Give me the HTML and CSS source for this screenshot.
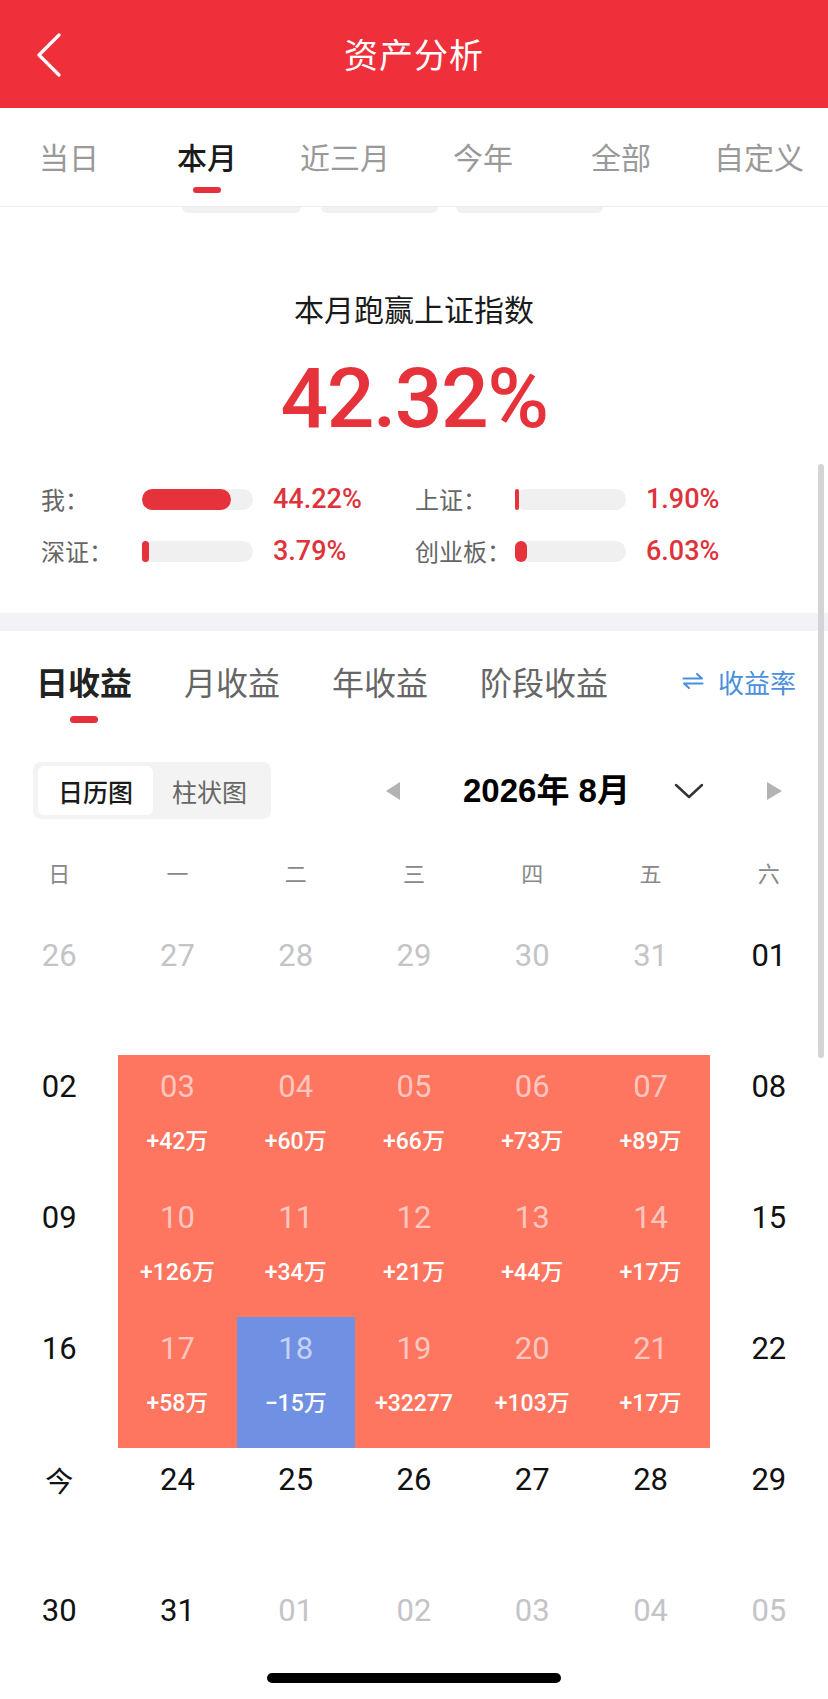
FILE: index.html
```html
<!DOCTYPE html>
<html lang="zh-CN">
<head>
<meta charset="utf-8">
<title>资产分析</title>
<link rel="stylesheet" href="styles.css">
</head>
<body>
<div class="screen">
  <header class="nav">
    <div class="nav-left">
      <svg class="back" width="26" height="44" viewBox="0 0 26 44"><polyline points="23,2 3,22 23,42" fill="none" stroke="#fff" stroke-width="3.2" stroke-linecap="round" stroke-linejoin="round"/></svg>
    </div>
    <h1 class="nav-title">资产分析</h1>
    <div class="nav-right"></div>
  </header>

  <nav class="period-tabs">
    <div class="ptab"><span>当日</span><i></i></div>
    <div class="ptab active"><span>本月</span><i></i></div>
    <div class="ptab"><span>近三月</span><i></i></div>
    <div class="ptab"><span>今年</span><i></i></div>
    <div class="ptab"><span>全部</span><i></i></div>
    <div class="ptab"><span>自定义</span><i></i></div>
  </nav>
  <div class="ghost-pills">
    <div class="gp gp1"></div>
    <div class="gp gp2"></div>
    <div class="gp gp3"></div>
  </div>

  <section class="summary">
    <div class="sum-title">本月跑赢上证指数</div>
    <div class="sum-value">42.32%</div>
    <div class="compare">
      <div class="c-label">我：</div>
      <div class="c-bar"><div class="c-fill" style="width:89px"></div></div>
      <div class="c-val">44.22%</div>
      <div class="c-label">上证：</div>
      <div class="c-bar"><div class="c-fill" style="width:4px"></div></div>
      <div class="c-val">1.90%</div>
      <div class="c-label">深证：</div>
      <div class="c-bar"><div class="c-fill" style="width:7px"></div></div>
      <div class="c-val">3.79%</div>
      <div class="c-label">创业板：</div>
      <div class="c-bar"><div class="c-fill" style="width:12px"></div></div>
      <div class="c-val">6.03%</div>
    </div>
  </section>

  <div class="band"></div>

  <section class="earn">
    <div class="etabs">
      <div class="etab active"><span>日收益</span><i></i></div>
      <div class="etab"><span>月收益</span><i></i></div>
      <div class="etab"><span>年收益</span><i></i></div>
      <div class="etab"><span>阶段收益</span><i></i></div>
      <div class="rate">
        <svg width="22" height="18" viewBox="0 0 22 18"><path d="M1.5 6.5 H20 L15 2" fill="none" stroke="#4a8fdc" stroke-width="2" stroke-linecap="round" stroke-linejoin="round"/><path d="M20.5 11.5 H2 L7 16" fill="none" stroke="#4a8fdc" stroke-width="2" stroke-linecap="round" stroke-linejoin="round"/></svg>
        <span>收益率</span>
      </div>
    </div>

    <div class="toolbar">
      <div class="seg">
        <div class="seg-item on">日历图</div>
        <div class="seg-item">柱状图</div>
      </div>
      <div class="picker">
        <span class="tri tri-left"></span>
        <span class="month">2026年 8月</span>
        <svg class="chev" width="30" height="18" viewBox="0 0 30 18"><polyline points="2,3 15,15 28,3" fill="none" stroke="#333" stroke-width="2.4" stroke-linecap="round" stroke-linejoin="round"/></svg>
        <span class="tri tri-right"></span>
      </div>
    </div>

    <div class="weekdays">
      <div>日</div><div>一</div><div>二</div><div>三</div><div>四</div><div>五</div><div>六</div>
    </div>

    <div class="cal">
      <div class="cell dim"><b>26</b></div>
      <div class="cell dim"><b>27</b></div>
      <div class="cell dim"><b>28</b></div>
      <div class="cell dim"><b>29</b></div>
      <div class="cell dim"><b>30</b></div>
      <div class="cell dim"><b>31</b></div>
      <div class="cell"><b>01</b></div>

      <div class="cell"><b>02</b></div>
      <div class="cell up"><b>03</b><em>+42万</em></div>
      <div class="cell up"><b>04</b><em>+60万</em></div>
      <div class="cell up"><b>05</b><em>+66万</em></div>
      <div class="cell up"><b>06</b><em>+73万</em></div>
      <div class="cell up"><b>07</b><em>+89万</em></div>
      <div class="cell"><b>08</b></div>

      <div class="cell"><b>09</b></div>
      <div class="cell up"><b>10</b><em>+126万</em></div>
      <div class="cell up"><b>11</b><em>+34万</em></div>
      <div class="cell up"><b>12</b><em>+21万</em></div>
      <div class="cell up"><b>13</b><em>+44万</em></div>
      <div class="cell up"><b>14</b><em>+17万</em></div>
      <div class="cell"><b>15</b></div>

      <div class="cell"><b>16</b></div>
      <div class="cell up"><b>17</b><em>+58万</em></div>
      <div class="cell down"><b>18</b><em>−15万</em></div>
      <div class="cell up"><b>19</b><em>+32277</em></div>
      <div class="cell up"><b>20</b><em>+103万</em></div>
      <div class="cell up"><b>21</b><em>+17万</em></div>
      <div class="cell"><b>22</b></div>

      <div class="cell"><b class="cjk">今</b></div>
      <div class="cell"><b>24</b></div>
      <div class="cell"><b>25</b></div>
      <div class="cell"><b>26</b></div>
      <div class="cell"><b>27</b></div>
      <div class="cell"><b>28</b></div>
      <div class="cell"><b>29</b></div>

      <div class="cell"><b>30</b></div>
      <div class="cell"><b>31</b></div>
      <div class="cell dim"><b>01</b></div>
      <div class="cell dim"><b>02</b></div>
      <div class="cell dim"><b>03</b></div>
      <div class="cell dim"><b>04</b></div>
      <div class="cell dim"><b>05</b></div>
    </div>
  </section>

  <div class="scrollbar"></div>
  <div class="home-indicator"></div>
</div>
</body>
</html>
```

FILE: styles.css
```css
* { box-sizing: border-box; margin: 0; padding: 0; }
html, body { width: 828px; height: 1699px; overflow: hidden; background: #fff; }
body {
  font-family: "Noto Sans CJK SC", "Noto Sans", sans-serif;
  color: #222;
}
.screen { position: relative; width: 828px; height: 1699px; overflow: hidden; background: #fff; }

/* nav */
.nav {
  height: 108px;
  background: #ef303a;
  display: grid;
  grid-template-columns: 1fr auto 1fr;
  align-items: center;
}
.nav-left { padding-left: 36px; display: flex; align-items: center; padding-top: 2px; }
.nav-title {
  font-size: 34px;
  font-weight: 400;
  color: #fff;
  line-height: 44px;
  letter-spacing: 1px;
}

/* period tabs */
.period-tabs {
  display: grid;
  grid-template-columns: repeat(6, 1fr);
  padding-top: 28px;
  padding-bottom: 13px;
  border-bottom: 1px solid #ececec;
}
.ptab { display: flex; flex-direction: column; align-items: center; }
.ptab span { font-size: 30px; line-height: 40px; color: #999; }
.ptab i { display: block; width: 28px; height: 6px; margin-top: 11px; border-radius: 3px; background: transparent; }
.ptab.active span { color: #1a1a1a; font-weight: 500; }
.ptab.active i { background: #e3303a; }

.ghost-pills { display: flex; height: 6px; padding-left: 182px; }
.gp { height: 6px; background: #f1f1f1; border-radius: 0 0 9px 9px; }
.gp1 { width: 119px; }
.gp2 { width: 117px; margin-left: 20px; }
.gp3 { width: 147px; margin-left: 18px; }

/* summary */
.summary { padding-top: 75px; padding-bottom: 36px; }
.sum-title { text-align: center; font-size: 30px; line-height: 40px; color: #1a1a1a; }
.sum-value {
  text-align: center;
  margin-top: 21px;
  font-family: Roboto, "Liberation Sans", sans-serif;
  font-size: 84px;
  font-weight: 500;
  line-height: 100px;
  color: #e6323b;
  letter-spacing: -1.5px;
}
.compare {
  margin-top: 24px;
  display: grid;
  grid-template-columns: 101px 111px 162px 100px 111px 1fr;
  grid-auto-rows: 52px;
  align-items: center;
  padding-left: 41px;
}
.c-label { font-size: 24px; color: #666; line-height: 32px; }
.c-bar { height: 21px; border-radius: 11px; background: #f0f0f0; }
.c-fill { height: 100%; background: #e6323b; border-radius: 999px; }
.c-val {
  padding-left: 20px;
  font-family: Roboto, "Liberation Sans", sans-serif;
  font-size: 27px;
  font-weight: 500;
  color: #e0323b;
  line-height: 32px;
}

.band { height: 18px; background: #f2f3f7; }

/* earnings */
.etabs {
  display: flex;
  align-items: flex-start;
  padding-top: 28px;
  padding-left: 36px;
  padding-right: 32px;
}
.etab { display: flex; flex-direction: column; align-items: center; margin-right: 52px; }
.etab span { font-size: 32px; line-height: 44px; color: #666; }
.etab i { display: block; width: 28px; height: 7px; margin-top: 13px; border-radius: 4px; }
.etab.active span { color: #222; font-weight: 700; }
.etab.active i { background: #e3303a; }
.rate {
  margin-left: auto;
  display: flex;
  align-items: center;
  height: 44px;
  gap: 14px;
  color: #4a8fdc;
  font-size: 26px;
}
.etab:nth-child(4) { margin-right: 0; }

.toolbar { display: flex; align-items: center; margin-top: 39px; padding-left: 33px; }
.seg {
  width: 238px;
  height: 57px;
  padding: 4px 5px;
  background: #f3f3f3;
  border-radius: 8px;
  display: flex;
}
.seg-item {
  flex: 1;
  display: flex; align-items: center; justify-content: center;
  font-size: 25px;
  color: #666;
  border-radius: 6px;
}
.seg-item.on { background: #fff; color: #1a1a1a; font-weight: 500; flex: 0 0 115px; }

.picker { display: flex; align-items: center; margin-left: 115px; width: 396px; }
.tri { width: 0; height: 0; border-top: 9px solid transparent; border-bottom: 9px solid transparent; }
.tri-left { border-right: 14px solid #b3b3b3; }
.tri-right { border-left: 15px solid #b3b3b3; margin-left: 63px; }
.month {
  margin-left: 63px;
  font-family: "Liberation Sans", "Noto Sans CJK SC", sans-serif;
  font-weight: 700;
  font-size: 33px;
  line-height: 40px;
  color: #000;
}
.chev { margin-left: auto; }

.weekdays {
  display: grid;
  grid-template-columns: repeat(7, 1fr);
  margin-top: 38px;
  margin-bottom: 37px;
  height: 30px;
}
.weekdays div { text-align: center; font-size: 22px; line-height: 30px; color: #888; }

.cal { display: grid; grid-template-columns: repeat(7, 1fr); grid-auto-rows: 131px; }
.cell { display: flex; flex-direction: column; align-items: center; padding-top: 12px; }
.cell b {
  font-family: Roboto, "Liberation Sans", "Noto Sans CJK SC", sans-serif;
  font-weight: 400;
  font-size: 31px;
  line-height: 40px;
  color: #111;
}
.cell b.cjk { font-family: "Noto Sans CJK SC", sans-serif; font-size: 28px; }
.cell.dim b { color: #c4c4c8; }
.cell em {
  font-style: normal;
  margin-top: 19px;
  font-family: Roboto, "Noto Sans CJK SC", sans-serif;
  font-weight: 500;
  font-size: 23px;
  line-height: 32px;
  color: #fff;
}
.cell.up { background: #fe7560; }
.cell.down { background: #7090e3; }
.cell.up b, .cell.down b { color: rgba(255, 255, 255, 0.6); }

/* overlays */
.scrollbar {
  position: absolute;
  left: 818px; top: 464px;
  width: 6px; height: 594px;
  border-radius: 3px;
  background: #d4d4d4;
}
.home-indicator {
  position: absolute;
  left: 267px; top: 1673px;
  width: 294px; height: 10px;
  border-radius: 5px;
  background: #000;
}
```
